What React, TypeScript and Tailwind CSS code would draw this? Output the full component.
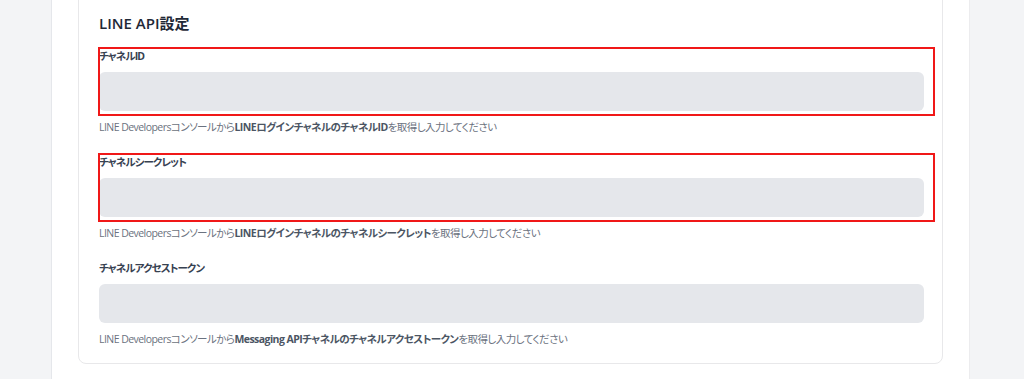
import type { ReactNode } from "react";

const FONT = "font-['Open_Sans','Noto_Sans_CJK_JP',sans-serif] [font-feature-settings:'palt']";

type Field = {
  label: string;
  lead: string;
  strong: string;
  tail: string;
  marked?: boolean;
};

const FIELDS: Field[] = [
  {
    label: "チャネルID",
    lead: "LINE Developersコンソールから",
    strong: "LINEログインチャネルのチャネルID",
    tail: "を取得し入力してください",
    marked: true,
  },
  {
    label: "チャネルシークレット",
    lead: "LINE Developersコンソールから",
    strong: "LINEログインチャネルのチャネルシークレット",
    tail: "を取得し入力してください",
    marked: true,
  },
  {
    label: "チャネルアクセストークン",
    lead: "LINE Developersコンソールから",
    strong: "Messaging APIチャネルのチャネルアクセストークン",
    tail: "を取得し入力してください",
  },
];

function Marked({ on, children }: { on?: boolean; children: ReactNode }) {
  return (
    <div className="relative">
      {children}
      {on && (
        <div className="pointer-events-none absolute -left-px top-0 -right-[11px] -bottom-[5px] border-2 border-[#f01818]" />
      )}
    </div>
  );
}

function SettingField({ f }: { f: Field }) {
  return (
    <div>
      <Marked on={f.marked}>
        <label className="block text-[10.5px] leading-[18px] font-bold tracking-[-0.9px] text-[#374151]">
          {f.label}
        </label>
        <input
          type="text"
          className="mt-[7px] block h-[39px] w-full rounded-md bg-[#e5e7eb] px-3 outline-none"
        />
      </Marked>
      <p className="mt-2 text-[10.5px] leading-4 tracking-[-0.55px] text-[#6b7280]">
        {f.lead}
        <span className="font-bold text-[#4b5563]">{f.strong}</span>
        {f.tail}
      </p>
    </div>
  );
}

export default function App() {
  return (
    <div className={`flex h-[379px] w-full overflow-hidden bg-[#f3f4f6] ${FONT}`}>
      <aside className="w-[52px] shrink-0 border-r border-[#e5e7eb]" />
      <main className="w-[918px] shrink-0 border-r border-[#ececee] bg-white pl-[26px] pr-[26px]">
        <div className="-mt-[10px] rounded-lg border border-[#e8e8ea] bg-white pl-5 pr-[18px] pt-5 pb-4">
          <h2 className="text-[15px] leading-6 font-semibold text-[#1f2937]">LINE API設定</h2>
          <div className="mt-3 flex flex-col gap-[18px]">
            {FIELDS.map((f) => (
              <SettingField key={f.label} f={f} />
            ))}
          </div>
        </div>
      </main>
      <div className="flex-1" />
    </div>
  );
}
